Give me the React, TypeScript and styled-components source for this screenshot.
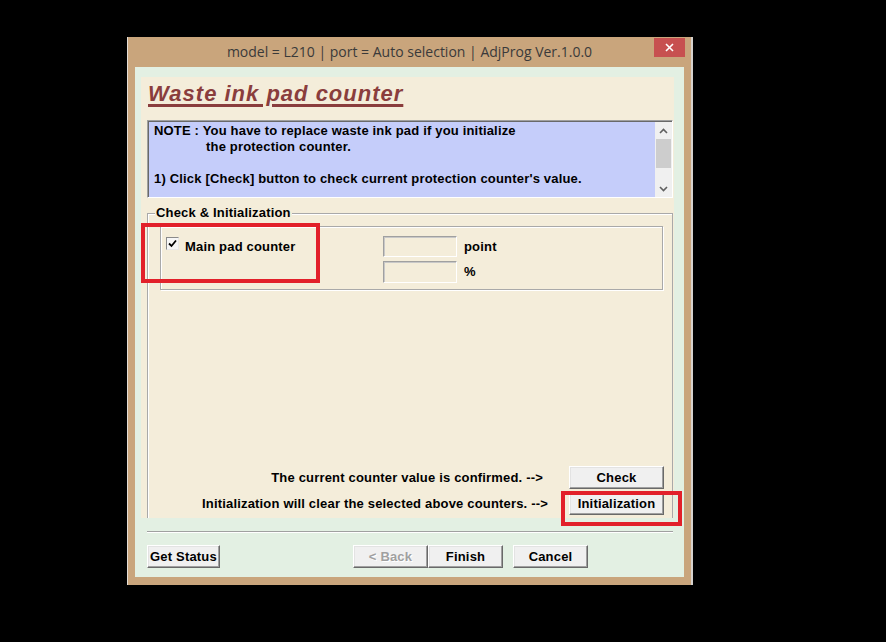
import React from "react";
import styled, { createGlobalStyle } from "styled-components";

const Global = createGlobalStyle`
  html, body { margin: 0; padding: 0; background: #000; }
  body { width: 886px; height: 642px; overflow: hidden; font-family: "Liberation Sans", Arial, sans-serif; }
`;

const Screen = styled.div`
  position: relative;
  width: 886px;
  height: 642px;
  box-sizing: border-box;
  background: #000;
  padding: 37px 0 0 127px;
`;

const Window = styled.div`
  width: 566px;
  height: 548px;
  box-sizing: border-box;
  background: #c9a57c;
  border-left: 1px solid #e4ded6;
  border-right: 2px solid #d6d2ce;
  display: flex;
  flex-direction: column;
`;

const TitleBar = styled.div`
  height: 30px;
  flex: none;
  display: grid;
  grid-template-columns: 1fr auto 1fr;
  align-items: start;
`;

const TitleText = styled.div`
  grid-column: 2;
  font-family: "Open Sans", "Noto Sans", sans-serif;
  font-size: 14px;
  line-height: 30px;
  color: #3a3a3a;
  white-space: nowrap;
`;

const CloseButton = styled.div`
  grid-column: 3;
  justify-self: end;
  margin: 1px 6px 0 0;
  width: 31px;
  height: 19px;
  background: #c75050;
  display: flex;
  align-items: center;
  justify-content: center;
`;

const Client = styled.div`
  flex: 1;
  margin: 0 7px 8px 7px;
  background: #e3f0e3;
  display: flex;
  flex-direction: column;
  padding-top: 10px;
`;

const Panel = styled.div`
  height: 441px;
  flex: none;
  margin: 0 10px 0 6px;
  background: #f4edda;
  display: flex;
  flex-direction: column;
  padding-left: 6px;
  box-sizing: border-box;
`;

const Heading = styled.h1`
  margin: 4px 0 0 1px;
  font-size: 22px;
  line-height: 26px;
  font-weight: bold;
  font-style: italic;
  letter-spacing: 1px;
  color: #8a3d3d;
  text-decoration: underline;
  text-decoration-thickness: 3px;
  text-underline-offset: 3px;
  align-self: flex-start;
`;

const NoteBox = styled.div`
  margin-top: 13px;
  width: 526px;
  height: 78px;
  flex: none;
  box-sizing: border-box;
  background: #c5cdfa;
  border: 1px solid;
  border-color: #a0a0a0 #ffffff #ffffff #a0a0a0;
  box-shadow: inset 1px 1px 0 #696969;
  display: flex;
`;

const NoteText = styled.div`
  flex: 1;
  padding: 2px 0 0 6px;
  font-size: 13px;
  font-weight: bold;
  letter-spacing: 0.18px;
  line-height: 16px;
  color: #000;
  white-space: nowrap;
`;

const NoteLine = styled.div<{ $indent?: number }>`
  height: 16px;
  padding-left: ${(p) => p.$indent ?? 0}px;
`;

const ScrollBar = styled.div`
  width: 17px;
  margin: 1px 0 0 0;
  background: #f0f0f0;
  display: flex;
  flex-direction: column;
  align-items: center;
`;

const ScrollArrow = styled.div`
  height: 17px;
  width: 17px;
  display: flex;
  align-items: center;
  justify-content: center;
`;

const ScrollThumb = styled.div`
  width: 15px;
  height: 29px;
  background: #cdcdcd;
`;

const ScrollTrack = styled.div`
  flex: 1;
`;

const Group = styled.section`
  margin-top: 15px;
  width: 526px;
  box-sizing: border-box;
  flex: 1;
  border: 1px solid #a9a9a9;
  border-bottom: none;
  box-shadow: inset 1px 1px 0 #fff;
  display: flex;
  flex-direction: column;
`;

const GroupLabel = styled.div`
  margin: -9px 0 0 7px;
  align-self: flex-start;
  padding: 0 1px;
  font-size: 13px;
  font-weight: bold;
  letter-spacing: 0.18px;
  line-height: 16px;
  color: #000;
  background: #f4edda;
`;

const CounterBox = styled.div`
  margin: 5px 9px 0 12px;
  height: 64px;
  box-sizing: border-box;
  border: 1px solid #a9a9a9;
  box-shadow: 1px 1px 0 #fff, inset 1px 1px 0 #fff;
  display: grid;
  grid-template-columns: 210px 74px auto;
  grid-template-rows: 21px 22px;
  column-gap: 7px;
  row-gap: 4px;
  padding: 9px 0 0 5px;
`;

const CheckRow = styled.div`
  display: flex;
  align-items: flex-start;
  gap: 6px;
`;

const CheckBox = styled.div`
  margin-top: 1px;
  width: 13px;
  height: 13px;
  box-sizing: border-box;
  background: #f6f6f6;
  border: 1px solid;
  border-color: #8a8a8a #e8e8e8 #e8e8e8 #8a8a8a;
  display: flex;
  align-items: center;
  justify-content: center;
`;

const Label = styled.span`
  font-size: 13px;
  font-weight: bold;
  letter-spacing: 0.18px;
  line-height: 21px;
  color: #000;
  white-space: nowrap;
`;

const Field = styled.div`
  grid-column: 2;
  box-sizing: border-box;
  background: #f4edda;
  border: 1px solid;
  border-color: #a0a0a0 #ffffff #ffffff #a0a0a0;
  box-shadow: inset 1px 1px 0 #c8c8c8;
`;

const Unit = styled(Label)`
  grid-column: 3;
`;

const Actions = styled.div`
  margin-top: auto;
  margin-bottom: 3px;
  display: grid;
  grid-template-columns: 1fr 95px;
  row-gap: 3px;
  padding-right: 8px;
`;

const ActionText = styled.div<{ $pad: number }>`
  text-align: right;
  padding-right: ${(p) => p.$pad}px;
  font-size: 13px;
  font-weight: bold;
  letter-spacing: 0.18px;
  line-height: 23px;
  color: #000;
  white-space: nowrap;
`;

const Button = styled.button<{ $w?: number; $disabled?: boolean }>`
  width: ${(p) => p.$w ?? 95}px;
  height: 23px;
  box-sizing: border-box;
  padding: 0;
  margin: 0;
  font-family: "Liberation Sans", Arial, sans-serif;
  font-size: 13px;
  font-weight: bold;
  letter-spacing: 0.18px;
  color: ${(p) => (p.$disabled ? "#a0a0a0" : "#000")};
  text-shadow: ${(p) => (p.$disabled ? "1px 1px 0 #fff" : "none")};
  background: #f0f0f0;
  border: 1px solid;
  border-color: #ffffff #696969 #696969 #ffffff;
  box-shadow: inset -1px -1px 0 #a0a0a0, inset 1px 1px 0 #e3e3e3;
  display: flex;
  align-items: center;
  justify-content: center;
`;

const Separator = styled.div`
  margin: 13px 11px 0 12px;
  height: 1px;
  background: #a0a0a0;
  border-bottom: 1px solid #fff;
`;

const BottomBar = styled.div`
  margin-top: 12px;
  padding: 0 96px 0 12px;
  display: flex;
  align-items: center;
  justify-content: space-between;
`;

const NavGroup = styled.div`
  display: flex;
`;

const NavGap = styled.div`
  width: 10px;
`;

const Highlight = styled.div<{ $x: number; $y: number; $w: number; $h: number }>`
  position: absolute;
  left: ${(p) => p.$x}px;
  top: ${(p) => p.$y}px;
  width: ${(p) => p.$w}px;
  height: ${(p) => p.$h}px;
  box-sizing: border-box;
  border: 4px solid #e2202a;
  pointer-events: none;
`;

const Chevron = ({ up }: { up?: boolean }) => (
  <svg width="9" height="6" viewBox="0 0 9 6">
    <path
      d={up ? "M1 5 L4.5 1.5 L8 5" : "M1 1 L4.5 4.5 L8 1"}
      fill="none"
      stroke="#606060"
      strokeWidth="1.6"
    />
  </svg>
);

export default function App() {
  return (
    <>
      <Global />
      <Screen>
        <Window>
          <TitleBar>
            <TitleText>model = L210 | port = Auto selection | AdjProg Ver.1.0.0</TitleText>
            <CloseButton>
              <svg width="9" height="9" viewBox="0 0 9 9">
                <path d="M1 1 L8 8 M8 1 L1 8" stroke="#fff" strokeWidth="1.6" />
              </svg>
            </CloseButton>
          </TitleBar>
          <Client>
            <Panel>
              <Heading>Waste ink pad counter</Heading>
              <NoteBox>
                <NoteText>
                  <NoteLine>NOTE : You have to replace waste ink pad if you initialize</NoteLine>
                  <NoteLine $indent={52}>the protection counter.</NoteLine>
                  <NoteLine />
                  <NoteLine>1) Click [Check] button to check current protection counter's value.</NoteLine>
                </NoteText>
                <ScrollBar>
                  <ScrollArrow>
                    <Chevron up />
                  </ScrollArrow>
                  <ScrollThumb />
                  <ScrollTrack />
                  <ScrollArrow>
                    <Chevron />
                  </ScrollArrow>
                </ScrollBar>
              </NoteBox>
              <Group>
                <GroupLabel>Check &amp; Initialization</GroupLabel>
                <CounterBox>
                  <CheckRow>
                    <CheckBox>
                      <svg width="9" height="9" viewBox="0 0 9 9">
                        <path d="M1 4.5 L3.5 7 L8 1.5" fill="none" stroke="#000" strokeWidth="1.8" />
                      </svg>
                    </CheckBox>
                    <Label>Main pad counter</Label>
                  </CheckRow>
                  <Field />
                  <Unit>point</Unit>
                  <Field />
                  <Unit>%</Unit>
                </CounterBox>
                <Actions>
                  <ActionText $pad={26}>The current counter value is confirmed. --&gt;</ActionText>
                  <Button>Check</Button>
                  <ActionText $pad={21}>Initialization will clear the selected above counters. --&gt;</ActionText>
                  <Button>Initialization</Button>
                </Actions>
              </Group>
            </Panel>
            <Separator />
            <BottomBar>
              <Button $w={73}>Get Status</Button>
              <NavGroup>
                <Button $w={75} $disabled>&lt; Back</Button>
                <Button $w={75}>Finish</Button>
                <NavGap />
                <Button $w={75}>Cancel</Button>
              </NavGroup>
            </BottomBar>
          </Client>
        </Window>
        <Highlight $x={141} $y={223} $w={179} $h={60} />
        <Highlight $x={561} $y={491} $w={121} $h={35} />
      </Screen>
    </>
  );
}
